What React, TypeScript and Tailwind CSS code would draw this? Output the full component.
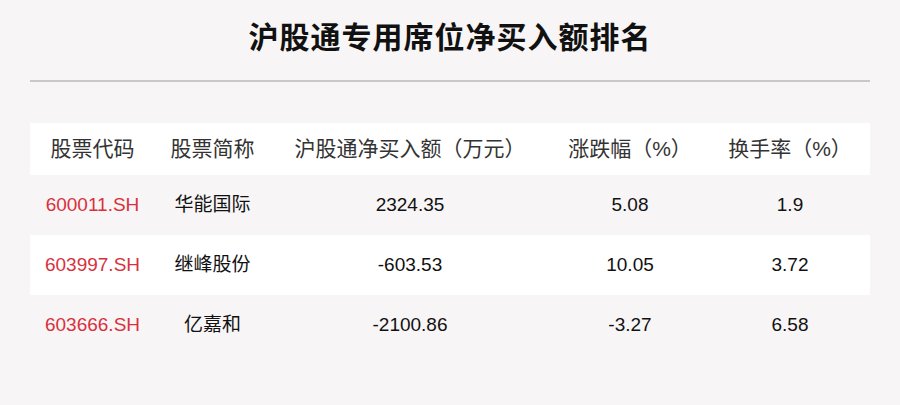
const font = { fontFamily: '"Liberation Sans", "Noto Sans CJK SC", sans-serif' };

const rows = [
  { code: '600011.SH', name: '华能国际', net: '2324.35', chg: '5.08', turn: '1.9' },
  { code: '603997.SH', name: '继峰股份', net: '-603.53', chg: '10.05', turn: '3.72' },
  { code: '603666.SH', name: '亿嘉和', net: '-2100.86', chg: '-3.27', turn: '6.58' },
];

const cols = 'grid grid-cols-[125px_115px_280px_160px_160px]';

export default function App() {
  return (
    <div className="w-[900px] h-[405px] bg-[#f8f5f6] px-[30px] overflow-hidden" style={font}>
      <h1 className="h-[80px] pt-[18px] text-center text-[30px] leading-[40px] font-bold text-[#111] tracking-[1px]">
        沪股通专用席位净买入额排名
      </h1>
      <div className="h-[2px] bg-[#c8c8c8]" />
      <div className="mt-[41px]">
        <div className={`${cols} h-[52px] items-center bg-white text-[21px] text-[#333] text-center`}>
          <div>股票代码</div>
          <div>股票简称</div>
          <div className="whitespace-nowrap">沪股通净买入额（万元）</div>
          <div>涨跌幅（%）</div>
          <div>换手率（%）</div>
        </div>
        {rows.map((r, i) => (
          <div
            key={r.code}
            className={`${cols} h-[60px] items-center text-[19px] text-[#111] text-center ${i % 2 === 1 ? 'bg-white' : ''}`}
          >
            <div className="text-[#d9313c]">{r.code}</div>
            <div>{r.name}</div>
            <div>{r.net}</div>
            <div>{r.chg}</div>
            <div>{r.turn}</div>
          </div>
        ))}
      </div>
    </div>
  );
}
